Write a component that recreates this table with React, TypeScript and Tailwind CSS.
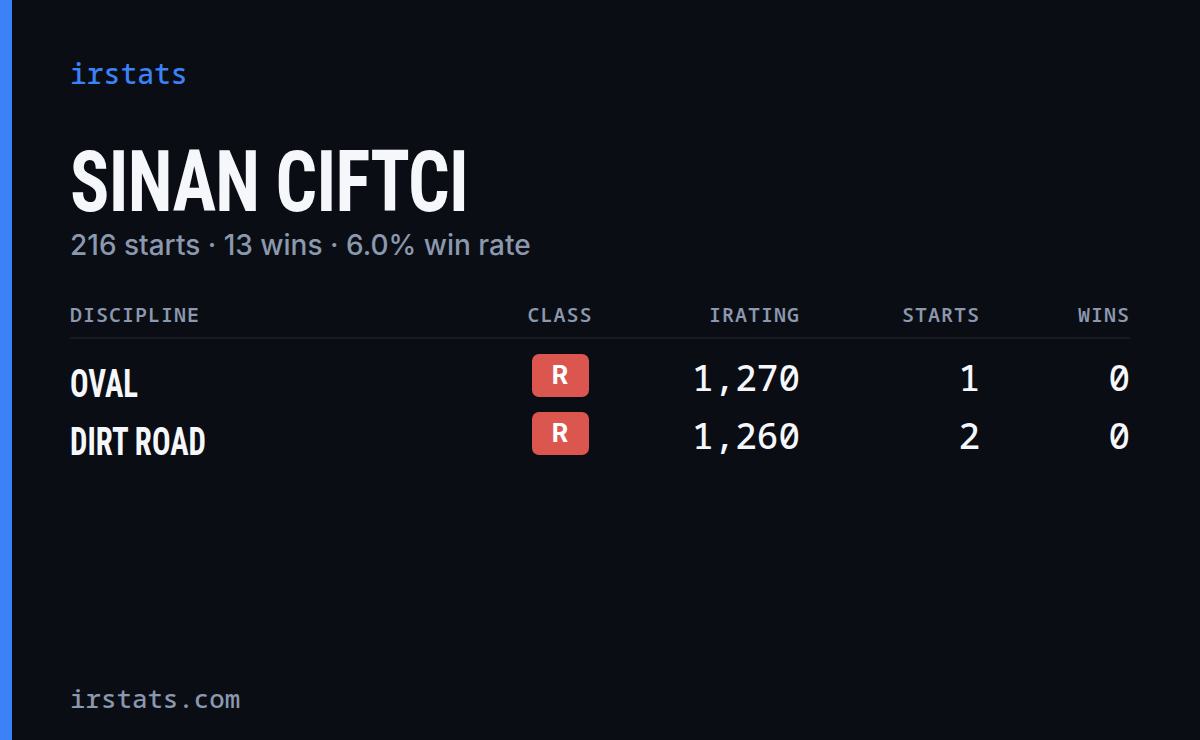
const rows = [
  { discipline: 'OVAL', cls: 'R', irating: '1,270', starts: '1', wins: '0' },
  { discipline: 'DIRT ROAD', cls: 'R', irating: '1,260', starts: '2', wins: '0' },
];

export default function App() {
  return (
    <div className="flex h-[740px] w-[1200px] overflow-hidden bg-[#0a0d14]">
      <div className="w-[12px] shrink-0 bg-[#3b82f6]" />

      <div className="flex flex-1 flex-col pl-[58px] pr-[70px] pt-[56px] pb-[27px]">
        <div className="font-['Noto_Sans_Mono',monospace] text-[28px] font-medium leading-[34px] text-[#3b82f6]">irstats</div>

        <h1 className="mt-[49px] h-[86px] font-['Roboto_Condensed',sans-serif] text-[86px] font-bold leading-none tracking-[-0.01em] text-[#f5f7fb]">
          <span className="block w-max origin-left scale-x-[0.85]">SINAN CIFTCI</span>
        </h1>
        <div className="mt-[3px] font-['Inter',sans-serif] text-[28px] font-medium leading-[34px] text-[#8b98ad]">
          216 starts · 13 wins · 6.0% win rate
        </div>

        <div className="mt-[41px] grid grid-cols-[1fr_100px_190px_180px_150px] border-b-2 border-[#161b25] pb-[10px] font-['Noto_Sans_Mono',monospace] text-[20px] font-semibold leading-[24px] tracking-[1px] text-[#8b98ad]">
          <div>DISCIPLINE</div>
          <div className="text-center">CLASS</div>
          <div className="text-right">IRATING</div>
          <div className="text-right">STARTS</div>
          <div className="text-right">WINS</div>
        </div>

        <div className="mt-[8px] flex flex-col">
          {rows.map((r) => (
            <div key={r.discipline} className="grid h-[58px] grid-cols-[1fr_100px_190px_180px_150px] items-start">
              <div className="mt-[18px] font-['Roboto_Condensed',sans-serif] text-[38px] font-bold leading-none text-[#f5f7fb]">
                <span className="block w-max origin-left scale-x-[0.81]">{r.discipline}</span>
              </div>
              <div className="mt-[7px] flex justify-center">
                <span className="flex h-[43px] w-[57px] items-center justify-center rounded-[7px] bg-[#dc5650] font-['Inter',sans-serif] text-[25px] font-bold leading-none text-white">
                  {r.cls}
                </span>
              </div>
              <div className="mt-[13px] text-right font-['Noto_Sans_Mono',monospace] text-[36px] font-medium leading-none text-[#f5f7fb]">{r.irating}</div>
              <div className="mt-[13px] text-right font-['Noto_Sans_Mono',monospace] text-[36px] font-medium leading-none text-[#f5f7fb]">{r.starts}</div>
              <div className="mt-[13px] text-right font-['Noto_Sans_Mono',monospace] text-[36px] font-medium leading-none text-[#f5f7fb]">{r.wins}</div>
            </div>
          ))}
        </div>

        <div className="mt-auto font-['Noto_Sans_Mono',monospace] text-[25.8px] font-medium leading-[30px] text-[#8b98ad]">irstats.com</div>
      </div>
    </div>
  );
}
